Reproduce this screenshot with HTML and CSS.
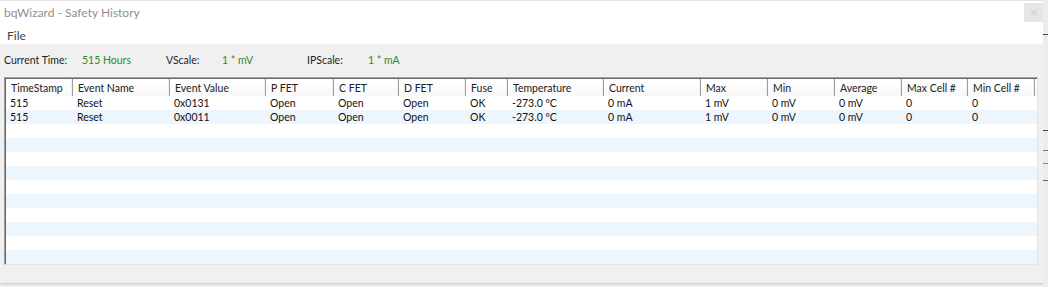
FILE: index.html
```html
<!DOCTYPE html>
<html>
<head>
<meta charset="utf-8">
<link rel="stylesheet" href="styles.css">
</head>
<body>
<div class="screen">
  <div class="window">
    <div class="titlebar">
      <span class="title">bqWizard - Safety History</span>
      <span class="close">×</span>
    </div>
    <div class="menubar"><span class="menu-item">File</span></div>
    <div class="content">
      <div class="info">
        <span class="lbl">Current Time:</span><span class="val">515 Hours</span>
        <span class="lbl">VScale:</span><span class="val">1 * mV</span>
        <span class="lbl">IPScale:</span><span class="val">1 * mA</span>
      </div>
      <div class="grid">
        <div class="grid-inner">
          <div class="row head">
            <span>TimeStamp</span><span>Event Name</span><span>Event Value</span><span>P FET</span><span>C FET</span><span>D FET</span><span>Fuse</span><span>Temperature</span><span>Current</span><span>Max</span><span>Min</span><span>Average</span><span>Max Cell #</span><span>Min Cell #</span>
          </div>
          <div class="row">
            <span>515</span><span>Reset</span><span>0x0131</span><span>Open</span><span>Open</span><span>Open</span><span>OK</span><span>-273.0 ºC</span><span>0 mA</span><span>1 mV</span><span>0 mV</span><span>0 mV</span><span>0</span><span>0</span>
          </div>
          <div class="row alt">
            <span>515</span><span>Reset</span><span>0x0011</span><span>Open</span><span>Open</span><span>Open</span><span>OK</span><span>-273.0 ºC</span><span>0 mA</span><span>1 mV</span><span>0 mV</span><span>0 mV</span><span>0</span><span>0</span>
          </div>
          <div class="row"></div>
          <div class="row alt"></div>
          <div class="row"></div>
          <div class="row alt"></div>
          <div class="row"></div>
          <div class="row alt"></div>
          <div class="row"></div>
          <div class="row alt"></div>
          <div class="row"></div>
          <div class="row alt"></div>
        </div>
      </div>
    </div>
  </div>
  <div class="behind">
    <div class="tick t1"></div>
    <div class="tick t2"></div>
    <div class="tick t3"></div>
    <div class="tick t4"></div>
    <div class="tick t5"></div>
  </div>
</div>
</body>
</html>
```
FILE: styles.css
```css
html, body {
  margin: 0;
  padding: 0;
  background: #f4f4f4;
}
body {
  font-family: Lato, "Liberation Sans", sans-serif;
  font-size: 10.5px;
  color: #1a1a1a;
  width: 1048px;
  height: 287px;
  overflow: hidden;
}
.screen {
  display: flex;
  align-items: flex-start;
}
.window {
  width: 1043px;
  height: 283px;
  display: flex;
  flex-direction: column;
  background: #ffffff;
  border-bottom: 1px solid #d4d4d4;
  box-shadow: 1px 1px 2px rgba(0,0,0,0.12);
}
.titlebar {
  height: 24px;
  border-top: 1px solid #e2e2e2;
  display: flex;
  align-items: flex-start;
  justify-content: space-between;
  background: #fff;
}
.title {
  font-size: 12px;
  color: #8f8f8f;
  padding: 4px 0 0 4px;
  line-height: 15px;
}
.close {
  width: 19px;
  height: 19px;
  margin-top: 2px;
  background: #e6e6e6;
  color: #cfcfcf;
  font-size: 11px;
  line-height: 19px;
  text-align: center;
  font-family: "DejaVu Sans", sans-serif;
}
.menubar {
  height: 19px;
  background: #fff;
  display: flex;
}
.menu-item {
  font-size: 12px;
  color: #444;
  padding: 3px 0 0 7px;
  line-height: 15px;
}
.content {
  flex: 1;
  background: #f0f0f0;
  display: flex;
  flex-direction: column;
}
.info {
  height: 33px;
  box-sizing: border-box;
  padding: 10px 0 0 4px;
  display: grid;
  grid-template-columns: 78px 84px 56px 85px 61px auto;
  align-items: start;
  line-height: 13px;
  color: #1e1e1e;
}
.info .val {
  color: #2f8a2f;
}
.grid {
  margin-left: 4px;
  width: 1034px;
  height: 188px;
  box-sizing: border-box;
  border: 1px solid;
  border-color: #a0a0a0 #e3e3e3 #e3e3e3 #9a9a9a;
  background: #fff;
  display: flex;
}
.grid-inner {
  flex: 1;
  border-top: 1px solid #6a6a6a;
  border-left: 1px solid #6a6a6a;
  display: flex;
  flex-direction: column;
  background: #fff;
}
.row {
  height: 14px;
  flex: none;
  display: grid;
  grid-template-columns: 67px 97px 96px 68px 65px 67px 42px 96px 97px 67px 67px 67px 66px 67px;
  line-height: 14px;
  color: #111;
}
.row span {
  padding-left: 4px;
  white-space: nowrap;
  overflow: hidden;
}
.row.alt {
  background: #eef6fd;
}
.row.head {
  height: 17px;
  line-height: 18px;
  background: linear-gradient(#ffffff, #f8f8f8);
}
.row.head span {
  border-right: 1px solid #9d9d9d;
  box-shadow: inset -1px 0 0 #f0f0f0;
  color: #222;
  padding-left: 5px;
}
.behind {
  width: 5px;
  height: 287px;
  background: #ececec;
  display: flex;
  flex-direction: column;
}
.tick {
  height: 1px;
  background: #444;
}
.t1 { margin-top: 34px; }
.t2 { margin-top: 95px; }
.t3 { margin-top: 19px; background: #777; }
.t4 { margin-top: 12px; background: #888; }
.t5 { margin-top: 16px; background: #666; }
```
